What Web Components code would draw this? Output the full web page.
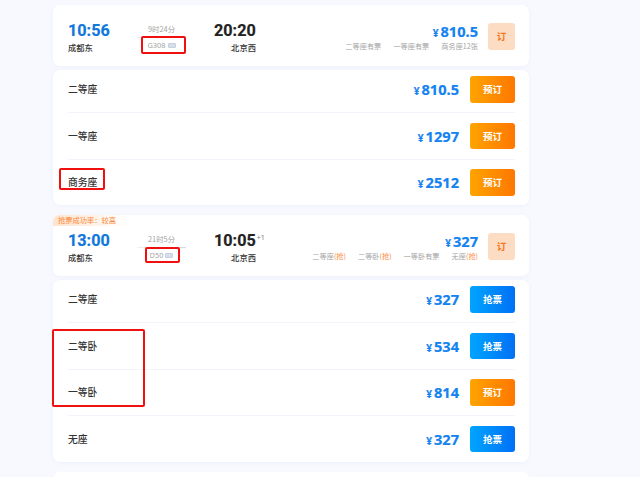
<!DOCTYPE html>
<html lang="zh"><head><meta charset="utf-8"><title>车次列表</title>
<style>
html,body{margin:0;height:477px;overflow:hidden;background:#fff}
body{font-family:"Noto Sans","Noto Sans CJK SC",sans-serif}
</style></head><body>
<train-page>
  <train-head dep="10:56" arr="20:20" dur="9时24分" no="G308" price="810.5" style="margin-top:5px">
    <seat-note>二等座有票</seat-note><seat-note>一等座有票</seat-note><seat-note>商务座12张</seat-note>
  </train-head>
  <seat-list>
    <seat-row name="二等座" price="810.5" kind="book"></seat-row>
    <seat-row name="一等座" price="1297" kind="book"></seat-row>
    <seat-row name="商务座" price="2512" kind="book"></seat-row>
  </seat-list>
  <train-head dep="13:00" arr="10:05" plus="+1" dur="21时5分" no="D50" price="327" badge="抢票成功率：较高" style="margin-top:10px">
    <seat-note>二等座<b>(抢)</b></seat-note><seat-note>二等卧<b>(抢)</b></seat-note><seat-note>一等卧有票</seat-note><seat-note>无座<b>(抢)</b></seat-note>
  </train-head>
  <seat-list>
    <seat-row name="二等座" price="327" kind="grab"></seat-row>
    <seat-row name="二等卧" price="534" kind="grab"></seat-row>
    <seat-row name="一等卧" price="814" kind="book"></seat-row>
    <seat-row name="无座" price="327" kind="grab"></seat-row>
  </seat-list>
  <next-card></next-card>
  <red-mark style="left:141px;top:36px;width:41px;height:14px"></red-mark>
  <red-mark style="left:59px;top:168px;width:42px;height:18px"></red-mark>
  <red-mark style="left:145px;top:247px;width:31px;height:12px"></red-mark>
  <red-mark style="left:52px;top:329px;width:89px;height:74px"></red-mark>
</train-page>
<script>
const def=(name,html)=>customElements.define(name,class extends HTMLElement{
  connectedCallback(){
    if(this.shadowRoot)return;
    const a=n=>this.getAttribute(n)||'';
    this.attachShadow({mode:'open'}).innerHTML=html(a);
  }
});
def('train-page',()=>`<style>:host{display:block;position:relative;height:477px;overflow:hidden;background:#f8f9ff;padding:0 111px 0 53px;width:476px}</style><slot></slot>`);
def('train-head',a=>`<style>
:host{display:block;position:relative;height:61px;background:#fff;border-radius:7px;box-shadow:0 1px 4px rgba(220,225,245,.35)}
.wrap{display:flex;align-items:flex-start;height:100%;padding:0 14px 0 15px;box-sizing:border-box}
.end{width:42px;padding-top:16px;display:flex;flex-direction:column}
.t{font:700 16.2px/19px Roboto,"Noto Sans CJK SC",sans-serif;color:#1077dc;white-space:nowrap;-webkit-text-stroke:.2px currentColor}
.arr .t{color:#222}
.t sup{font:400 7px/1 "Noto Sans",sans-serif;color:#777;vertical-align:6px;margin-left:1px;-webkit-text-stroke:0}
.s{font:500 8.3px/12px "Noto Sans CJK SC",sans-serif;color:#333;white-space:nowrap;margin-top:.5px}
.arr .s{text-align:right}
.mid{width:49px;margin:0 28px 0 27px;padding-top:18px;display:flex;flex-direction:column;align-items:center;color:#a4a4a4;font:400 7.4px/12px "Noto Sans CJK SC",sans-serif}
.line{height:1px;width:100%;background:linear-gradient(90deg,#eef0f6,#d5d9e6);margin:2px 0 1px}
.no{display:flex;align-items:center;gap:2px;white-space:nowrap;font-family:"Noto Sans",sans-serif}
.no i{display:block;width:8px;height:5px;background:#d6dfea;border:.5px solid #c5d0dc;box-sizing:border-box;border-radius:1px}
.right{margin-left:auto;display:flex;flex-direction:column;align-items:flex-end;padding-top:17px}
.p{font:700 14.6px/18px "Noto Sans",sans-serif;color:#1482f0;white-space:nowrap;-webkit-text-stroke:.2px currentColor}
.p small{font-size:10px;line-height:1;margin-right:2px}
.notes{display:flex;gap:12px;height:12px}
.btn{width:27px;height:27px;margin:18px 0 0 10px;background:#fddcc4;border-radius:3px;color:#f5761a;font:700 9.5px/27px "Noto Sans CJK SC",sans-serif;text-align:center}
.badge{position:absolute;left:0;top:0;width:75px;height:11px;padding-left:5px;box-sizing:border-box;border-radius:7px 0 0 0;background:linear-gradient(90deg,#ffe3cc,#fff);color:#f98a3c;font:400 7.25px/11px "Noto Sans CJK SC",sans-serif;white-space:nowrap}
</style>
${a('badge')?`<div class="badge">${a('badge')}</div>`:''}
<div class="wrap">
<div class="end"><div class="t">${a('dep')}</div><div class="s">成都东</div></div>
<div class="mid"><div>${a('dur')}</div><div class="line"></div><div class="no">${a('no')}<i></i></div></div>
<div class="end arr"><div class="t">${a('arr')}${a('plus')?`<sup>${a('plus')}</sup>`:''}</div><div class="s">北京西</div></div>
<div class="right"><div class="p"><small>¥</small>${a('price')}</div><div class="notes"><slot></slot></div></div>
<div class="btn">订</div>
</div>`);
def('seat-note',()=>`<style>:host{display:block;font:400 7.2px/12px "Noto Sans CJK SC",sans-serif;color:#a4a4a4;white-space:nowrap}::slotted(b){font-weight:400;color:#f98a3c}</style><slot></slot>`);
def('seat-list',()=>`<style>:host{display:block;margin-top:4px;background:#fff;border-radius:7px;padding:6px 14px 10px 15px;box-shadow:0 1px 4px rgba(220,225,245,.35)}</style><slot></slot>`);
def('seat-row',a=>`<style>
:host{display:flex;align-items:flex-start;height:37px;margin-bottom:9.5px;box-sizing:border-box;border-bottom:1px solid #f3f4fb}
:host(:last-child){height:26px;margin-bottom:0;border-bottom:0}
.n{font:500 9.8px/27px "Noto Sans CJK SC",sans-serif;color:#333;white-space:nowrap}
.p{margin-left:auto;font:700 14.6px/27px "Noto Sans",sans-serif;color:#1482f0;white-space:nowrap;-webkit-text-stroke:.2px currentColor}
.p small{font-size:10px;line-height:1;margin-right:2px}
.b{width:45px;height:26.5px;margin-left:11px;border-radius:3px;color:#fff;font:700 9.5px/26.5px "Noto Sans CJK SC",sans-serif;text-align:center}
.book{background:linear-gradient(90deg,#ffa400,#ff7700)}
.grab{background:linear-gradient(90deg,#00a5ff,#0070f5)}
</style><div class="n">${a('name')}</div><div class="p"><small>¥</small>${a('price')}</div><div class="b ${a('kind')}">${a('kind')=='book'?'预订':'抢票'}</div>`);
def('next-card',()=>`<style>:host{display:block;height:40px;margin-top:10px;background:#fff;border-radius:7px}</style>`);
def('red-mark',()=>`<style>:host{display:block;position:absolute;border:2px solid #f01010;border-radius:2px;pointer-events:none}</style>`);
</script>
</body></html>
